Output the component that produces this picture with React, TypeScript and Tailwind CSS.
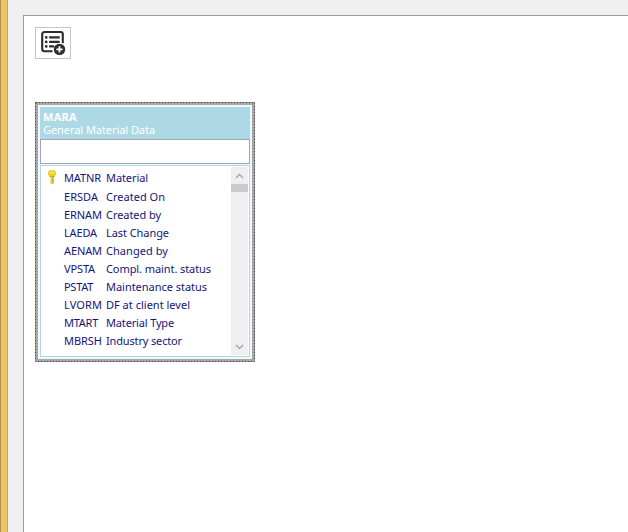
import React from 'react';

type Field = { name: string; label: string; nameWidth: number; labelWidth: number; key?: boolean };

const fields: Field[] = [
  { name: 'MATNR', label: 'Material', nameWidth: 37, labelWidth: 42, key: true },
  { name: 'ERSDA', label: 'Created On', nameWidth: 34, labelWidth: 59 },
  { name: 'ERNAM', label: 'Created by', nameWidth: 38, labelWidth: 55 },
  { name: 'LAEDA', label: 'Last Change', nameWidth: 33, labelWidth: 63 },
  { name: 'AENAM', label: 'Changed by', nameWidth: 38, labelWidth: 62 },
  { name: 'VPSTA', label: 'Compl. maint. status', nameWidth: 31, labelWidth: 105 },
  { name: 'PSTAT', label: 'Maintenance status', nameWidth: 29, labelWidth: 101 },
  { name: 'LVORM', label: 'DF at client level', nameWidth: 38, labelWidth: 84 },
  { name: 'MTART', label: 'Material Type', nameWidth: 34, labelWidth: 68 },
  { name: 'MBRSH', label: 'Industry sector', nameWidth: 38, labelWidth: 76 },
];

/** Spreads the letters so that a run of text takes exactly `width` pixels. */
function FitText({ text, width }: { text: string; width: number }) {
  const ref = React.useRef<HTMLSpanElement>(null);
  const [spacing, setSpacing] = React.useState(0);
  React.useLayoutEffect(() => {
    if (ref.current) {
      setSpacing((width - ref.current.getBoundingClientRect().width) / text.length);
    }
  }, [text, width]);
  return (
    <span ref={ref} className="inline-block whitespace-pre" style={{ letterSpacing: spacing }}>
      {text}
    </span>
  );
}

function AddListIcon() {
  return (
    <svg width="26" height="26" viewBox="0 0 26 26" fill="none" stroke="#2d2c2e">
      <path d="M12.5 21.3H4.4a2.2 2.2 0 0 1-2.2-2.2V4.2A2.2 2.2 0 0 1 4.4 2h16.2a2.2 2.2 0 0 1 2.2 2.2v9" strokeWidth="2.1" />
      <path d="M10 7.4h8.8M10 11.9h8.8M10 16.4h3.3" strokeWidth="2.3" strokeLinecap="round" />
      <path d="M6.2 7.4h.1M6.2 11.9h.1M6.2 16.4h.1" strokeWidth="2.6" strokeLinecap="round" />
      <circle cx="19.5" cy="19.4" r="5.7" fill="#2d2c2e" stroke="none" />
      <path d="M19.5 16.3v6.2M16.4 19.4h6.2" stroke="#fff" strokeWidth="1.8" />
    </svg>
  );
}

function KeyIcon() {
  return (
    <svg width="10" height="15" viewBox="0 0 10 15">
      <path d="M3.4 6h3.2v7.2L5.2 14.6 3.4 13.3z" fill="#ecd04a" />
      <path d="M5.9 6.5v7" stroke="#b89a28" strokeWidth="1" />
      <path d="M2.4.6h5.2L9 1.8v3L7.4 6.8H2.6L1 4.8v-3z" fill="#f2d51e" />
      <path d="M2.4 1.1h5.2" stroke="#d8bd35" strokeWidth=".8" />
      <path d="M3 2.6h4" stroke="#fff2a0" strokeWidth="1.2" />
      <path d="M2.4 6.4h5.2" stroke="#c9a91e" strokeWidth="1" />
    </svg>
  );
}

function Chevron({ down = false }: { down?: boolean }) {
  return (
    <svg width="9" height="6" viewBox="0 0 9 6" fill="none" stroke="#a5a5a5" strokeWidth="1.4">
      <path d={down ? 'M1 .9 4.5 4.4 8 .9' : 'M1 5 4.5 1.5 8 5'} />
    </svg>
  );
}

function ScrollBar() {
  return (
    <div className="mt-px flex h-[188px] w-[17px] flex-col items-center bg-[#efefef]">
      <div className="flex h-[17px] items-center"><Chevron /></div>
      <div className="h-2 w-full bg-[#cbcbcb]" />
      <div className="mt-auto flex h-[17px] items-center"><Chevron down /></div>
    </div>
  );
}

function TableNode() {
  return (
    <section className="relative mt-[43px] ml-[11px] h-[260px] w-[220px] bg-[#a7a7a7] p-[3px]">
      <svg className="pointer-events-none absolute inset-0" width="220" height="260">
        <rect x=".5" y=".5" width="219" height="259" fill="none" stroke="#ddd" />
        <rect x=".5" y=".5" width="219" height="259" fill="none" stroke="#484848" strokeDasharray="2 1" />
      </svg>
      <div className="h-full bg-[#f1f8fb] px-[2px] pt-[2px]">
        <header className="h-8 bg-[#add8e6] pt-[3px] pl-[3px] leading-[13px] text-white">
          <div className="font-bold"><FitText text="MARA" width={34} /></div>
          <div><FitText text="General Material Data" width={112} /></div>
        </header>
        <input className="block h-[25px] w-full border border-[#a1a5b2] bg-white outline-none" aria-label="Filter" />
        <div className="mt-px flex h-[192px] border border-[#add8e6] bg-white pr-px">
          <div className="flex-1 pt-[3px]">
            {fields.map((field) => (
              <div key={field.name} className="flex h-[18px] items-center leading-[18px] text-[#14147a] first:mb-px">
                <div className="flex w-[23px] pb-[2px] pl-[6px]">{field.key && <KeyIcon />}</div>
                <div className="w-[42px]"><FitText text={field.name} width={field.nameWidth} /></div>
                <FitText text={field.label} width={field.labelWidth} />
              </div>
            ))}
          </div>
          <ScrollBar />
        </div>
      </div>
    </section>
  );
}

export default function App() {
  return (
    <div className="flex h-[532px] w-[628px] overflow-hidden bg-[#f0f0f0] font-['Noto_Sans','Open_Sans',sans-serif] text-[11px]">
      <div className="w-2 shrink-0 border-r border-l border-r-[#c9a157] border-l-[#b58c4e] bg-[#edc467]" />
      <main className="mt-[15px] ml-[15px] flex-1 border-t border-l border-[#929ba6] bg-white pt-[11px]">
        <button className="ml-[11px] flex h-8 w-9 items-center justify-center border border-[#c6c6c6] bg-white" aria-label="Add table">
          <AddListIcon />
        </button>
        <TableNode />
      </main>
    </div>
  );
}
